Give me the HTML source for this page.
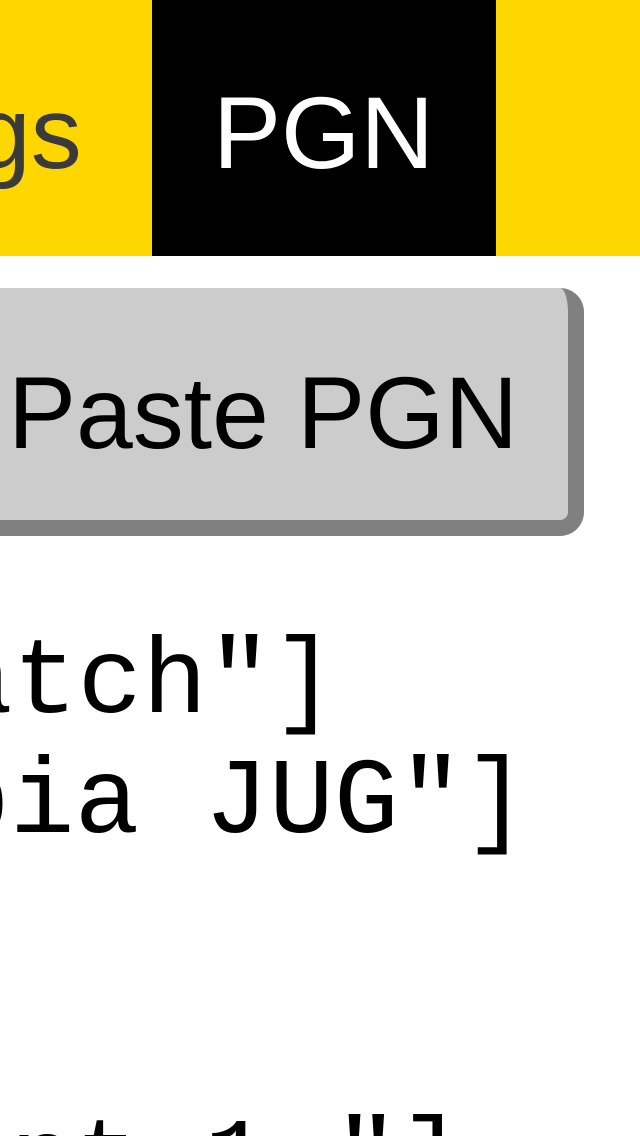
<!DOCTYPE html>
<html><head><style>
html,body{margin:0;padding:0;width:640px;height:1136px;overflow:hidden;background:#fff;position:relative}
.bar{position:absolute;left:0;top:0;width:640px;height:256px;background:#FFD700}
.tab{position:absolute;left:152px;top:0;width:344px;height:256px;background:#000}
.t{position:absolute;font-family:"Liberation Sans",sans-serif;font-size:102px;line-height:1;white-space:nowrap}
.btn{position:absolute;left:-200px;top:288px;width:768px;height:232px;background:#ccc;border-right:16px solid #808080;border-bottom:16px solid #808080;border-radius:24px}
.m{position:absolute;font-family:"Liberation Mono",monospace;font-size:108px;line-height:1;white-space:pre;color:#000}
</style></head><body>
<div class="bar"></div>
<div class="t" style="left:-26px;top:82px;color:#3a3a3a">gs</div>
<div class="tab"></div>
<div class="t" style="left:213px;top:82px;color:#fff">PGN</div>
<div class="btn"></div>
<div class="t" style="left:8px;top:362px;color:#000">Paste PGN</div>
<div class="m" style="left:-52px;top:630px">atch"]</div>
<div class="m" style="left:-55px;top:750px">pia JUG"]</div>
<div class="m" style="left:10px;top:1110px">nt 1."]</div>
</body></html>
